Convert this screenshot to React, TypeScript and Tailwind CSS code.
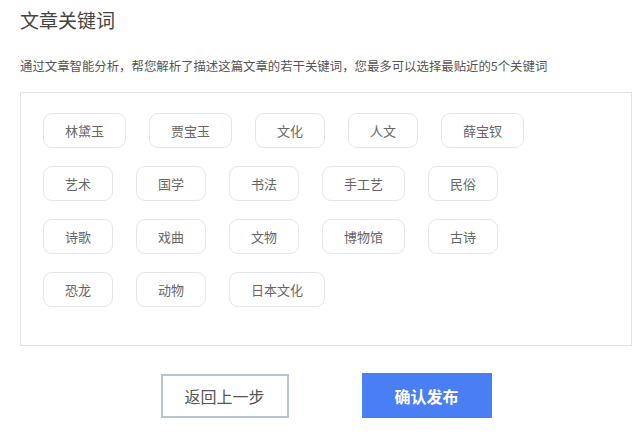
import React, { useState } from 'react';

const keywordRows: string[][] = [
    ['林黛玉', '贾宝玉', '文化', '人文', '薛宝钗'],
    ['艺术', '国学', '书法', '手工艺', '民俗'],
    ['诗歌', '戏曲', '文物', '博物馆', '古诗'],
    ['恐龙', '动物', '日本文化'],
];

const font = { fontFamily: '"Microsoft YaHei", "Noto Sans CJK SC", "Noto Sans", sans-serif' };

const App: React.FC = () => {
    const [selected, setSelected] = useState<string[]>([]);

    const toggle = (word: string) => {
        setSelected(prev =>
            prev.includes(word)
                ? prev.filter(w => w !== word)
                : prev.length < 5 ? [...prev, word] : prev
        );
    };

    return (
        <div className="min-h-[439px] bg-white pt-[7px] pl-[20px] w-[632px]" style={font}>
            <h2 className="text-[19px] leading-[25px] text-[#444]">文章关键词</h2>
            <p className="mt-[25px] text-[12.4px] leading-[18px] text-[#555]">
                通过文章智能分析，帮您解析了描述这篇文章的若干关键词，您最多可以选择最贴近的5个关键词
            </p>

            <div className="mt-[17px] h-[254px] border border-[#e3e3e3] pt-[20px] pl-[22px] flex flex-col gap-[18px]">
                {keywordRows.map((row, i) => (
                    <div key={i} className="flex gap-[23px]">
                        {row.map(word => (
                            <button
                                key={word}
                                onClick={() => toggle(word)}
                                className={`h-[35px] px-[21px] rounded-[9px] border text-[13px] leading-none ${
                                    selected.includes(word)
                                        ? 'border-[#4a7ef5] text-[#4a7ef5]'
                                        : 'border-[#e4e6ea] text-[#666]'
                                }`}
                            >
                                {word}
                            </button>
                        ))}
                    </div>
                ))}
            </div>

            <div className="mt-[27px] flex justify-center items-center gap-[73px]">
                <button className="w-[128px] h-[44px] border-2 border-[#b9c2cf] text-[16px] text-[#555] bg-white">
                    返回上一步
                </button>
                <button className="w-[130px] h-[45px] bg-[#4a7ef5] text-[16px] font-bold text-white">
                    确认发布
                </button>
            </div>
        </div>
    );
};

export default App;
